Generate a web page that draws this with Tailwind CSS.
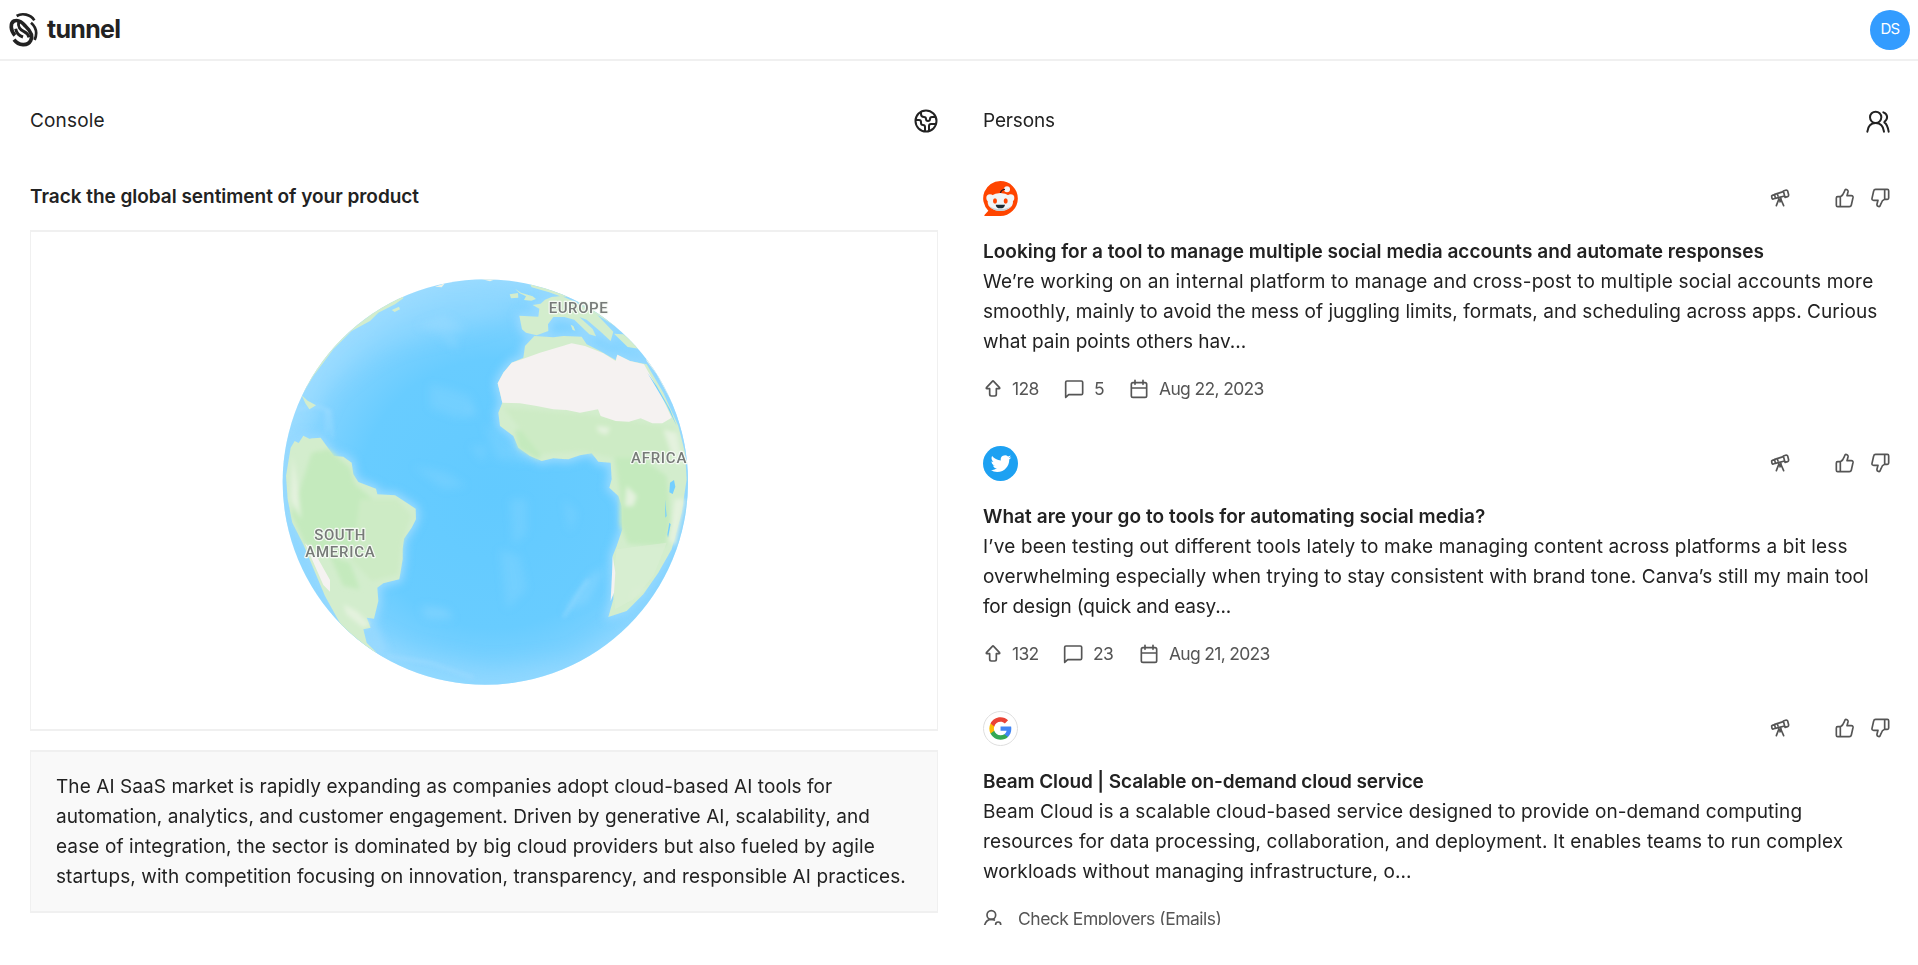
<!DOCTYPE html>
<html lang="en">
<head>
<meta charset="utf-8">
<title>tunnel</title>
<script src="https://cdn.jsdelivr.net/npm/@tailwindcss/browser@4"></script>
</head>
<body class="h-[965px] overflow-hidden bg-white font-['Inter',sans-serif] text-[#222]">

<svg class="hidden">
  <symbol id="telescope" viewBox="90 566 60 60"><g fill="none" stroke="currentColor" stroke-width="5" stroke-linejoin="round" stroke-linecap="round"><path d="M130 575l9-3q3 0 4 3l3 12q0 4-3 5l-8 2zM130 577l-26 8 2 12 28-7M104 586l-7 2q-3 1-2 4l1 5q1 3 4 2l6-2M112 584l2 6"/><path d="M116 601l-7 18M123 601l8 18M120 601v7"/><circle cx="119.500" cy="598" r="3.500"/></g></symbol>
  <symbol id="thumb" viewBox="285 566 60 60"><g fill="none" stroke="currentColor" stroke-width="5" stroke-linejoin="round" stroke-linecap="round"><path d="M301 592h-8q-4 0-4 4v22q0 4 4 4h8zM301 592q8-3 11-13l3-7q2-3 6-1 4 2 3 7l-3 11h13q6 0 5 6l-5 22q-1 5-6 5h-27"/></g></symbol>
  <symbol id="up" viewBox="72 656 54 60"><path fill="none" stroke="currentColor" stroke-width="5" stroke-linejoin="round" d="M97 663q2-2 4 0l17 18q3 4-1 4h-8v17q0 5-5 5h-10q-5 0-5-5v-17h-8q-4 0-1-4z"/></symbol>
  <symbol id="comment" viewBox="312 656 60 60"><path fill="none" stroke="currentColor" stroke-width="5" stroke-linejoin="round" d="M317 711v-45q0-4 4-4h43q4 0 4 4v33q0 4-4 4h-38z"/></symbol>
  <symbol id="calendar" viewBox="507 656 60 60"><path fill="none" stroke="currentColor" stroke-width="5" stroke-linecap="round" stroke-linejoin="round" d="M519 667h36q5 0 5 5v34q0 5-5 5h-36q-5 0-5-5v-34q0-5 5-5zM514 683h46M525 660v12M549 660v12"/></symbol>
  <symbol id="employers" viewBox="69 656 60 60"><g fill="none" stroke="currentColor" stroke-width="5" stroke-linecap="round"><circle cx="94" cy="674" r="13"/><path d="M74 704q5-17 20-17 6 0 9 2M107 706v-4q0-7 7.500-7t7.500 7v4"/></g></symbol>
</svg>

<header class="flex h-[61px] items-center justify-between border-b-2 border-[#f0f0f0] pr-2 pl-[9px]">
  <div class="flex items-center">
    <svg class="h-9 w-[30px]" viewBox="27 34 90 108" fill="none" stroke="#222">
      <path stroke-width="8" d="M50 46c16-10 42-5 53 13"/>
      <path stroke-width="11" d="M45 104c-14-14-15-37-3-43 13-5 24 3 34 15 16 15 24 30 16 44-9 17-36 16-50-3"/>
      <path stroke-width="9" d="M56 64c-3 14 5 24 15 28 9 4 14 10 16 18M47 84c2 12 10 21 22 25"/>
      <path stroke-width="8" d="M93 66c14 12 20 30 11 52"/>
    </svg>
    <span class="mb-0.5 ml-2 text-[25px] leading-9 font-bold tracking-[-0.7px]">tunnel</span>
  </div>
  <div class="flex size-10 items-center justify-center rounded-full bg-[#339cff] text-[15px] tracking-[-0.8px] text-white"><span>DS</span></div>
</header>

<main class="grid grid-cols-[908px_907px] gap-x-[45px] pl-[30px]">
  <section>
    <div class="mt-[45px] flex h-[30px] items-center justify-between">
      <h2 class="text-[19px] leading-[30px] tracking-[0.17px]">Console</h2>
      <svg class="size-6" viewBox="0 0 24 24" fill="none" stroke="#222" stroke-width="2" stroke-linecap="round" stroke-linejoin="round"><circle cx="12" cy="12" r="10.500"/><path d="M21.540 15H17a2 2 0 0 0-2 2v4.540M7 3.340V5a3 3 0 0 0 3 3 2 2 0 0 1 2 2c0 1.100.900 2 2 2a2 2 0 0 0 2-2c0-1.100.900-2 2-2h3.170M11 21.950V18a2 2 0 0 0-2-2 2 2 0 0 1-2-2v-1a2 2 0 0 0-2-2H2.050"/></svg>
    </div>
    <h3 class="mt-[46px] text-[19px] leading-[30px] font-semibold tracking-[-0.03px]">Track the global sentiment of your product</h3>
    <div class="mt-[18px] flex h-[501px] items-center justify-center border-x border-y-2 border-[#f0f0f0]">
      <svg class="ml-0.5 size-[430px]" viewBox="0 0 1290 1290">
        <defs>
          <radialGradient id="sea" cx=".52" cy=".53" r=".52"><stop offset="0" stop-color="#62caff"/><stop offset=".6" stop-color="#68ccff"/><stop offset=".85" stop-color="#82d3ff"/><stop offset="1" stop-color="#a0ddff"/></radialGradient>
          <clipPath id="disc"><circle cx="646" cy="648" r="608"/></clipPath>
          <filter id="soft" x="-20%" y="-20%" width="140%" height="140%"><feGaussianBlur stdDeviation="12"/></filter>
          <filter id="wide" x="-20%" y="-20%" width="140%" height="140%"><feGaussianBlur stdDeviation="30"/></filter>
          <filter id="haze" x="-20%" y="-20%" width="140%" height="140%"><feGaussianBlur stdDeviation="6"/></filter>
          <path id="samerica" d="M62 545l12-20 12 6 14-22 18 9 34-3 18 25 22 30 28 2 25 18 5 35 15 23 53 20 4 17 53 3 35 22 27 18 1 32-13 25-23 33-4 32v30l-10 60-48 12-18 13 3 40-13 53-22-3 12 30-22 5 10 40 30 30-40-10-60-60-55-100-40-95-25-60-33-65-14-70-5-70z"/>
          <path id="africa" d="M793 210l57 4 30-4 55 2 15 23 40 20 47 27 5-16 38 19 50 10 50 85 45 100 20 80 5 80-15 100-30 110-40 70-45 65-50 50-55 18 15-53v-80l-2-50 12-30 17-50-2-70-10-30-27-25 7-25-3-50-37-3-20-25-35 6-35 12-45-3-35 8-35-15-35-25-15-35-40-30-5-40 12-30-7-30-7-28 17-32 25-30 35-15 5-35z"/>
          <path id="europe" d="M748 149l57 3 3-24-20-11 24-4 13-12 20-8 30-3 45 20 60 35 50 52-8 28-30-28-42-36-22-8 40 36 10 22-20-6-45-44-30-8-33 0-16 22 1 20-35 13-32-8-12-10z"/>
        </defs>
        <g clip-path="url(#disc)">
          <rect width="1290" height="1290" fill="url(#sea)"/>
          <g filter="url(#wide)" fill="#a6dffe">
            <path opacity=".32" d="M330 120C450 50 600 60 760 90L700 150 600 180 500 200 380 230 290 280 180 370 130 480 90 560 60 430 160 260z"/>
            <path opacity=".4" d="M40 1000l260 100 120 60 240 50 250-30 200-140 140-160 10 200-300 230H400z"/>
          </g>
          <g filter="url(#soft)" fill="#a6dffe">
            <path opacity=".2" d="M480 355l60 15 60 20 20 60-60 5-80-30zM430 600l100 20 60 40-70 10zM720 700l50 0 0 100-40 40zM690 850l60 20 20 100-60 60zM880 700l40 40-20 60zM640 470l80 60 60 60-100-10zM600 540l50 0-10 50z"/>
            <path opacity=".35" d="M450 1020l80 10 20 30-80-5zM880 1040l80-110 50-30-60 110zM500 200l60 20 0 30zM440 180l80-30 70 40-60 10zM590 430l20-10-10 25z"/>
          </g>
          <g fill="#98d9fe" stroke="#98d9fe" stroke-width="20" stroke-linejoin="round" filter="url(#soft)"><use href="#samerica"/><use href="#africa"/><use href="#europe"/><path d="M310 1080l30 80-20 10z"/></g>
          <path d="M80 430l60-10 40 15 8 80M170 430l0 70M350 1170l130 20 130 45M880 1055l50-80 25-35" fill="none" stroke="#b4e3fe" stroke-width="6" opacity=".55" filter="url(#haze)"/>
          <g fill="#d3edcd"><use href="#samerica"/><use href="#africa"/><use href="#europe"/>
            <path d="M400 97l-25 18-50 25-25 25-55 30-55 55-60 80-30 50-30-20L240 150l150-90zM365 132l22-10 3 8-16 8zM95 388l18 16 25 14-20 12-12-18zM735 68l18 12 35 11 10 8-14 5-22-2 6-11-20-10zM719 85l25-4 1 14-22 2zM780 55l40 10 35 5 50 22-30 0-40-14-50-14zM1032 203l28 2 55 45-42-7zM902 176l8 4 6 14-8-2zM800 20l200 40 80 100-30 30L940 120z"/>
            <path fill="#eff3e8" d="M495 62l30-10-10 12zM630 38h50l-20 8zM1130 285l30 40 60 110 30 90 40-10-70-270-100-100-10 60z"/></g>
          <g filter="url(#haze)" clip-path="url(#disc)">
            <path fill="#c4eabd" d="M125 560l50-10 65 55 15 50 60 50-50 60-10 80-60 30-90-40-40-90zM735 490l90 20 0 40-20 30-60-35zM1030 560l90 20 70 50 15 150-20 60-110-5-25-60v-100zM180 870l60 20 30 80-50-10z"/>
            <path fill="#cdebc5" d="M270 700l110 0 45 50-30 80-10 95-80 20-60-60zM700 425l250 20 260 40 20 90-200 0-90-20-130 10z"/>
            <path fill="#e4f2de" d="M220 1015l40 20 40 40-20 10-50-40zM1070 660l30 30-10 30-25 0zM980 480l40 5-10 22-25-10zM1130 960l-50 40 10-25zM1180 490l40 10 20 100-30-20zM1215 700l30 0-30 140-20-20zM68 570l15 90 10 100-30-60z"/>
          </g>
          <path fill="#d8edd2" d="M1040 850l150-20-40 100-60 70-55 30-5-100z" opacity=".8"/>
          <path fill="#f5f2f1" d="M725 290l35-12 50-18 50-15 45-13 40 8 55 22 37 23 5-19 38 19 42 10 48 85 35 75-28 17-30 0-35-15-35 10-40-2-45-15-8-20-54 10-40-8-40-2-50-10-50-8-53-2-7-30-7-28 17-32zM105 832l30 30 45 80 0 35-20-20zM1028 870l8 50-4 60-10 25 4-80z"/>
          <path fill="#74cfff" d="M1132 320l28 40 40 70 38 95-18-45-30-62zM1200 650l12-8 4 20-8 22-10-5zM1185 700l5 50-4 5zM1198 770l4 5-8 40-2-10z"/>
        </g>
        <g class="font-['Roboto',sans-serif]" font-size="45" font-weight="500" fill="#777b78" stroke="#f5faf4" stroke-width="7" stroke-linejoin="round" paint-order="stroke">
          <text x="836" y="141" textLength="177">EUROPE</text><text x="1083" y="592" textLength="166">AFRICA</text><text x="133" y="822" textLength="153">SOUTH</text><text x="106" y="873" textLength="208">AMERICA</text>
        </g>
      </svg>
    </div>
    <div class="mt-[19px] h-[163px] border-x border-y-2 border-[#f0f0f0] bg-[#f9f9f9] px-[25px] pt-5 text-[19px] leading-[30px] whitespace-nowrap">
      <p><span class="tracking-[0.07px]">The AI SaaS market is rapidly expanding as companies adopt cloud-based AI tools for</span><br><span class="tracking-[0.075px]">automation, analytics, and customer engagement. Driven by generative AI, scalability, and</span><br><span class="tracking-[0.11px]">ease of integration, the sector is dominated by big cloud providers but also fueled by agile</span><br><span class="tracking-[0.09px]">startups, with competition focusing on innovation, transparency, and responsible AI practices.</span></p>
    </div>
  </section>

  <section class="h-[864px] overflow-hidden">
    <div class="mt-[45px] flex h-[30px] items-center justify-between">
      <h2 class="text-[19px] leading-[30px] tracking-[-0.15px]">Persons</h2>
      <svg class="h-[23px] w-6" viewBox="377 328 72 69" fill="none" stroke="#222" stroke-width="6" stroke-linecap="round"><circle cx="406" cy="350" r="17"/><path d="M381 393c2-17 12-26 25-26s23 9 25 26M429 335c14 5 15 20 3 29M432 365c7 5 11 15 13 28"/></svg>
    </div>

    <article class="mt-11 h-[265px]">
      <div class="flex h-9 items-center justify-between">
        <svg class="size-[35px]" viewBox="0 0 105 105"><path fill="#ff4500" d="M52 0a52 52 0 1 1 0 105H7q-5 0-2-4l11-12A52 52 0 0 1 52 0z"/><circle cx="72" cy="25" r="9" fill="#f3f6f7"/><path d="M52 38q1-12 14-13" fill="none" stroke="#32191a" stroke-width="4"/><circle cx="21" cy="51" r="11" fill="#f3f6f7"/><circle cx="83" cy="51" r="11" fill="#f3f6f7"/><ellipse cx="52" cy="63" rx="38" ry="27" fill="#f1f5f6"/><path d="M18 74q12 16 34 16t34-16q-12 10-34 10t-34-10" fill="#c5d2d8"/><ellipse cx="36" cy="60" rx="6" ry="8" fill="#ff4500"/><ellipse cx="68" cy="60" rx="6" ry="8" fill="#ff4500"/><path fill="#1b2c33" d="M38 71h28q-1 11-14 11T38 71z"/></svg>
        <div class="flex items-center text-[#555]"><svg class="mr-[45px] size-5"><use href="#telescope"/></svg><svg class="mr-[15px] size-5"><use href="#thumb"/></svg><svg class="size-5 rotate-180"><use href="#thumb"/></svg></div>
      </div>
      <div class="mt-[21px] text-[19px] leading-[30px] whitespace-nowrap">
        <h3 class="font-semibold tracking-[0.02px]">Looking for a tool to manage multiple social media accounts and automate responses</h3>
        <p><span class="tracking-[0.19px]">We’re working on an internal platform to manage and cross-post to multiple social accounts more</span><br><span class="tracking-[0.055px]">smoothly, mainly to avoid the mess of juggling limits, formats, and scheduling across apps. Curious</span><br><span>what pain points others hav...</span></p>
      </div>
      <div class="mt-[17px] flex h-[30px] items-center text-[17.500px] tracking-[-0.65px] text-[#555]">
        <svg class="ml-px h-5 w-[18px]"><use href="#up"/></svg><span class="ml-2.5 w-[26px]">128</span>
        <svg class="ml-[26px] size-5"><use href="#comment"/></svg><span class="ml-2.5 w-[10px]">5</span>
        <svg class="ml-[25px] size-5"><use href="#calendar"/></svg><span class="ml-2.5">Aug 22, 2023</span>
      </div>
    </article>

    <article class="h-[265px]">
      <div class="flex h-9 items-center justify-between">
        <svg class="size-[35px]" viewBox="0 0 35 35"><circle cx="17.500" cy="17.500" r="17.500" fill="#1da1f2"/><path transform="translate(7.700 7.300) scale(.86)" fill="#fff" d="M23.953 4.570a10 10 0 01-2.825.775 4.958 4.958 0 002.163-2.723c-.951.555-2.005.959-3.127 1.184a4.920 4.920 0 00-8.384 4.482C7.690 8.095 4.067 6.130 1.640 3.162a4.822 4.822 0 00-.666 2.475c0 1.710.870 3.213 2.188 4.096a4.904 4.904 0 01-2.228-.616v.060a4.923 4.923 0 003.946 4.827 4.996 4.996 0 01-2.212.085 4.936 4.936 0 004.604 3.417 9.867 9.867 0 01-6.102 2.105c-.390 0-.779-.023-1.170-.067a13.995 13.995 0 007.557 2.209c9.053 0 13.998-7.496 13.998-13.985 0-.210 0-.420-.015-.630A9.935 9.935 0 0024 4.590z"/></svg>
        <div class="flex items-center text-[#555]"><svg class="mr-[45px] size-5"><use href="#telescope"/></svg><svg class="mr-[15px] size-5"><use href="#thumb"/></svg><svg class="size-5 rotate-180"><use href="#thumb"/></svg></div>
      </div>
      <div class="mt-[21px] text-[19px] leading-[30px] whitespace-nowrap">
        <h3 class="font-semibold tracking-[0.055px]">What are your go to tools for automating social media?</h3>
        <p><span class="tracking-[0.165px]">I’ve been testing out different tools lately to make managing content across platforms a bit less</span><br><span class="tracking-[0.078px]">overwhelming especially when trying to stay consistent with brand tone. Canva’s still my main tool</span><br><span class="tracking-[-0.2px]">for design (quick and easy...</span></p>
      </div>
      <div class="mt-[17px] flex h-[30px] items-center text-[17.500px] tracking-[-0.7px] text-[#555]">
        <svg class="ml-px h-5 w-[18px]"><use href="#up"/></svg><span class="ml-2.5 w-[26px]">132</span>
        <svg class="ml-[25px] size-5"><use href="#comment"/></svg><span class="ml-2.5 w-5">23</span>
        <svg class="ml-[26px] size-5"><use href="#calendar"/></svg><span class="ml-2.5">Aug 21, 2023</span>
      </div>
    </article>

    <article class="h-[265px]">
      <div class="flex h-9 items-center justify-between">
        <svg class="size-[35px]" viewBox="0 0 35 35"><circle cx="17.500" cy="17.500" r="17" fill="#fff" stroke="#dedede"/><g transform="translate(5.300 5.300) scale(1.02)"><path fill="#4285f4" d="M22.560 12.250c0-.780-.070-1.530-.200-2.250H12v4.260h5.920c-.260 1.370-1.040 2.530-2.210 3.310v2.770h3.570c2.080-1.920 3.280-4.740 3.280-8.090z"/><path fill="#34a853" d="M12 23c2.970 0 5.460-.980 7.280-2.660l-3.570-2.770c-.980.660-2.230 1.060-3.710 1.060-2.860 0-5.290-1.930-6.160-4.530H2.180v2.840C3.990 20.530 7.700 23 12 23z"/><path fill="#fbbc05" d="M5.840 14.090c-.220-.660-.350-1.360-.350-2.090s.130-1.430.350-2.090V7.070H2.180C1.430 8.550 1 10.220 1 12s.430 3.450 1.180 4.930l3.660-2.840z"/><path fill="#ea4335" d="M12 5.380c1.620 0 3.060.560 4.210 1.640l3.150-3.150C17.450 2.090 14.970 1 12 1 7.700 1 3.990 3.470 2.180 7.070l3.660 2.840c.870-2.600 3.300-4.530 6.160-4.530z"/></g></svg>
        <div class="flex items-center text-[#555]"><svg class="mr-[45px] size-5"><use href="#telescope"/></svg><svg class="mr-[15px] size-5"><use href="#thumb"/></svg><svg class="size-5 rotate-180"><use href="#thumb"/></svg></div>
      </div>
      <div class="mt-[21px] text-[19px] leading-[30px] whitespace-nowrap">
        <h3 class="font-semibold tracking-[-0.11px]">Beam Cloud | Scalable on-demand cloud service</h3>
        <p><span class="tracking-[0.12px]">Beam Cloud is a scalable cloud-based service designed to provide on-demand computing</span><br><span class="tracking-[0.12px]">resources for data processing, collaboration, and deployment. It enables teams to run complex</span><br><span class="tracking-[0.1px]">workloads without managing infrastructure, o...</span></p>
      </div>
      <div class="mt-[17px] flex h-[30px] items-center text-[17.500px] tracking-[-0.5px] text-[#555]">
        <svg class="size-5"><use href="#employers"/></svg><span class="ml-[15px]">Check Employers (Emails)</span>
      </div>
    </article>
  </section>
</main>
</body>
</html>
